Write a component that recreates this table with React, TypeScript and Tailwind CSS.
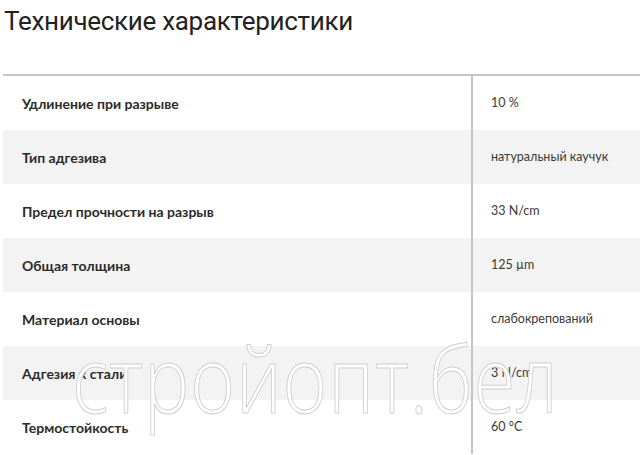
import React from "react";

const rows: [string, string][] = [
  ["Удлинение при разрыве", "10 %"],
  ["Тип адгезива", "натуральный каучук"],
  ["Предел прочности на разрыв", "33 N/cm"],
  ["Общая толщина", "125 µm"],
  ["Материал основы", "слабокрепований"],
  ["Адгезия к стали", "3 N/cm"],
  ["Термостойкость", "60 °C"],
];

export default function App() {
  return (
    <div className="relative w-[640px] h-[455px] overflow-hidden bg-white">
      <h1 className="pl-[4px] pt-[1px] h-[74px] text-[26px] leading-[40px] tracking-[-0.3px] text-[#222] font-['Roboto',sans-serif] font-normal">
        Технические характеристики
      </h1>
      <div className="ml-[3px] border-t-2 border-[#c4c4c4]">
        {rows.map(([k, v], i) => (
          <div
            key={k}
            className={`grid grid-cols-[470px_1fr] h-[54px] ${i % 2 === 1 ? "bg-[#f3f3f3]" : "bg-white"}`}
          >
            <div className="flex items-center pl-[19px] pt-[1px] border-r-2 border-[#c4c4c4] text-[14px] font-bold text-[#2b2b2b] font-['Lato',sans-serif]">
              {k}
            </div>
            <div className="flex items-center pl-[18px] pt-[1px] text-[12.5px] text-[#3a3a3a] font-['Lato',sans-serif]">
              {v}
            </div>
          </div>
        ))}
      </div>
      <div className="pointer-events-none absolute left-[72px] top-[332px] origin-left scale-x-[0.83] text-[92px] leading-none tracking-[1px] font-['Open_Sans',sans-serif] font-light text-white [-webkit-text-stroke:1px_#cfcfcf]">
        стройопт.бел
      </div>
    </div>
  );
}
